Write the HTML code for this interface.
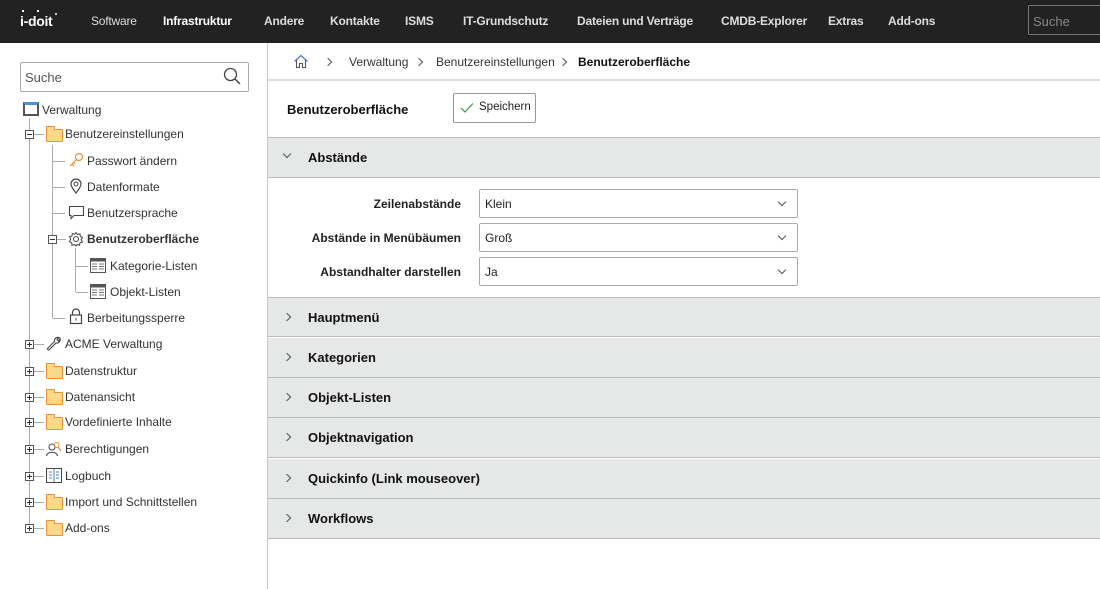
<!DOCTYPE html>
<html><head><meta charset="utf-8"><style>
*{margin:0;padding:0;box-sizing:border-box}
body{width:1100px;height:589px;overflow:hidden;background:#fff;font-family:"Liberation Sans",sans-serif;font-size:12px;color:#222;position:relative}
.a{position:absolute}
#top{left:0;top:0;width:1100px;height:43px;background:#222}
.nav{top:14px;color:#ddd;font-size:12px;font-weight:bold;letter-spacing:-0.2px}
#side{left:0;top:43px;width:268px;height:546px;border-right:1px solid #c8c8c8}
.t{font-size:12px;color:#333;white-space:nowrap}
.vl{background:#aaa;width:1px}
.hl{background:#aaa;height:1px}
.pb{width:9px;height:9px;border:1px solid #555;background:#fff}
.pb:before{content:"";position:absolute;left:1px;top:3px;width:5px;height:1px;background:#333}
.pb.p:after{content:"";position:absolute;left:3px;top:1px;width:1px;height:5px;background:#333}
.fold{width:17px;height:13px;border:1px solid #e8913b;background:#fbd98c;border-radius:1px}
.fold:before{content:"";position:absolute;left:-1px;top:-4px;width:7px;height:3px;border:1px solid #e8913b;border-bottom:none;background:#fbd98c;border-radius:1px 1px 0 0}
.sec{left:268px;width:832px;height:40px;background:#e6e7e7;border-bottom:1px solid #bbb}
.sec b{position:absolute;left:40px;top:12px;font-size:13px;color:#111}
.sec i{position:absolute;left:16px;top:16px;width:6px;height:6px;border-right:1px solid #555;border-top:1px solid #555;transform:rotate(45deg)}
.lbl{font-weight:bold;font-size:12px;color:#222;text-align:right;width:200px;left:261px}
.sel{left:479px;width:319px;height:29px;border:1px solid #aaa;border-radius:2px;background:#fff}
.sel span{position:absolute;left:5px;top:7px;font-size:12px}
.sel i{position:absolute;right:12px;top:9px;width:6px;height:6px;border-right:1px solid #555;border-bottom:1px solid #555;transform:rotate(45deg)}
.bc{font-size:12px;color:#333;top:55px}
.chev{width:6px;height:6px;border-right:1px solid #555;border-top:1px solid #555;transform:rotate(45deg)}
</style></head><body>
<div id="top" class="a"></div>
<div class="a" style="left:20px;top:13px;color:#fff;font-weight:bold;font-size:14px;letter-spacing:-0.3px">i-doit</div>
<div class="a" style="left:22px;top:10px;width:2px;height:2px;background:#fff"></div>
<div class="a" style="left:37px;top:10px;width:2px;height:2px;background:#fff"></div>
<div class="a" style="left:55px;top:13px;width:2px;height:2px;background:#ccc"></div>
<div class="a nav" style="left:91px;font-weight:normal">Software</div>
<div class="a nav" style="left:163px;color:#fff">Infrastruktur</div>
<div class="a nav" style="left:264px">Andere</div>
<div class="a nav" style="left:330px">Kontakte</div>
<div class="a nav" style="left:405px">ISMS</div>
<div class="a nav" style="left:463px">IT-Grundschutz</div>
<div class="a nav" style="left:577px">Dateien und Verträge</div>
<div class="a nav" style="left:721px">CMDB-Explorer</div>
<div class="a nav" style="left:828px">Extras</div>
<div class="a nav" style="left:888px">Add-ons</div>
<div class="a" style="left:1028px;top:5px;width:80px;height:30px;border:1px solid #777;border-radius:2px;background:#222"></div>
<div class="a" style="left:1033px;top:14px;color:#888;font-size:13px">Suche</div>

<div id="side" class="a"></div>
<div class="a" style="left:20px;top:62px;width:229px;height:30px;border:1px solid #aaa;border-radius:2px"></div>
<div class="a" style="left:25px;top:70px;color:#555;font-size:13px">Suche</div>
<svg class="a" style="left:223px;top:67px" width="18" height="18"><circle cx="7.5" cy="7.5" r="6" fill="none" stroke="#444" stroke-width="1.3"/><line x1="12" y1="12" x2="17" y2="17" stroke="#444" stroke-width="1.4"/></svg>

<div class="a vl" style="left:29px;top:118px;height:410px"></div>
<div class="a vl" style="left:52px;top:145px;height:173px"></div>
<div class="a vl" style="left:75px;top:248px;height:44px"></div>
<div class="a" style="left:23px;top:102px;width:16px;height:14px;border:2px solid #555;border-top:3px solid #4a90d9;background:#fff"></div>
<div class="a t" style="left:42px;top:103px">Verwaltung</div>
<div class="a pb" style="left:25px;top:130px"></div><div class="a hl" style="left:34px;top:134px;width:10px"></div>
<div class="a fold" style="left:46px;top:129px"></div>
<div class="a t" style="left:65px;top:127px">Benutzereinstellungen</div>
<div class="a hl" style="left:53px;top:161px;width:12px"></div>
<svg class="a" style="left:68px;top:152px" width="16" height="16"><circle cx="11" cy="5" r="3.5" fill="none" stroke="#e8913b" stroke-width="1.2"/><path d="M8.5 7.5 L2 14 M4 12 L6 14 M5.5 10.5 L7 12" stroke="#e8913b" stroke-width="1.2" fill="none"/></svg>
<div class="a t" style="left:87px;top:154px">Passwort ändern</div>
<div class="a hl" style="left:53px;top:187px;width:12px"></div>
<svg class="a" style="left:69px;top:178px" width="14" height="17"><path d="M7 15 C3 10 2 8 2 6 A5 5 0 0 1 12 6 C12 8 11 10 7 15Z" fill="none" stroke="#444" stroke-width="1.2"/><circle cx="7" cy="6" r="2" fill="none" stroke="#444"/></svg>
<div class="a t" style="left:87px;top:180px">Datenformate</div>
<div class="a hl" style="left:53px;top:213px;width:12px"></div>
<svg class="a" style="left:68px;top:205px" width="17" height="15"><path d="M1.5 1.5 H15.5 V10.5 H6 L3 13.5 V10.5 H1.5Z" fill="none" stroke="#444" stroke-width="1.1"/></svg>
<div class="a t" style="left:87px;top:206px">Benutzersprache</div>
<div class="a pb" style="left:48px;top:235px"></div><div class="a hl" style="left:57px;top:239px;width:9px"></div>
<svg class="a" style="left:68px;top:231px" width="16" height="16"><circle cx="8" cy="8" r="2.5" fill="none" stroke="#444" stroke-width="1.1"/><path d="M8 1.5 L9.5 3.5 L12 2.8 L12.3 5.3 L14.5 6.5 L13.2 8.8 L14.5 11 L12 11.8 L11.5 14.3 L9 13.5 L8 15 L6.5 13.5 L4 14.3 L3.7 11.8 L1.5 10.5 L2.8 8 L1.5 5.8 L4 5 L4.3 2.5 L6.8 3.3Z" fill="none" stroke="#444" stroke-width="1"/></svg>
<div class="a t" style="left:87px;top:232px;font-weight:bold">Benutzeroberfläche</div>
<div class="a hl" style="left:76px;top:266px;width:12px"></div>
<svg class="a" style="left:90px;top:258px" width="16" height="15"><rect x="0.5" y="0.5" width="15" height="14" fill="#fff" stroke="#555"/><rect x="0.5" y="0.5" width="15" height="3" fill="#555"/><path d="M2 6H7M2 8.5H7M2 11H7M9 6H14M9 8.5H14M9 11H14" stroke="#777"/></svg>
<div class="a t" style="left:110px;top:259px">Kategorie-Listen</div>
<div class="a hl" style="left:76px;top:292px;width:12px"></div>
<svg class="a" style="left:90px;top:284px" width="16" height="15"><rect x="0.5" y="0.5" width="15" height="14" fill="#fff" stroke="#555"/><rect x="0.5" y="0.5" width="15" height="3" fill="#555"/><path d="M2 6H7M2 8.5H7M2 11H7M9 6H14M9 8.5H14M9 11H14" stroke="#777"/></svg>
<div class="a t" style="left:110px;top:285px">Objekt-Listen</div>
<div class="a hl" style="left:53px;top:318px;width:12px"></div>
<svg class="a" style="left:69px;top:308px" width="14" height="17"><path d="M3.5 7 V4.5 A3.5 3.5 0 0 1 10.5 4.5 V7" fill="none" stroke="#444" stroke-width="1.2"/><rect x="1.5" y="7" width="11" height="8.5" fill="none" stroke="#444" stroke-width="1.2"/><rect x="6.5" y="10" width="1" height="2.5" fill="#444"/></svg>
<div class="a t" style="left:87px;top:311px">Berbeitungssperre</div>
<div class="a pb p" style="left:25px;top:340px"></div><div class="a hl" style="left:34px;top:344px;width:10px"></div>
<svg class="a" style="left:46px;top:336px" width="16" height="16"><path d="M14 2.5 A3.5 3.5 0 0 1 10 7 L3 14 A1.4 1.4 0 0 1 1.5 12.5 L8.5 5.5 A3.5 3.5 0 0 1 13 1.5 L11 3.5 L12.5 5 Z" fill="none" stroke="#444" stroke-width="1.1"/></svg>
<div class="a t" style="left:65px;top:337px">ACME Verwaltung</div>
<div class="a pb p" style="left:25px;top:367px"></div><div class="a hl" style="left:34px;top:371px;width:10px"></div>
<div class="a fold" style="left:46px;top:366px"></div><div class="a t" style="left:65px;top:364px">Datenstruktur</div>
<div class="a pb p" style="left:25px;top:393px"></div><div class="a hl" style="left:34px;top:397px;width:10px"></div>
<div class="a fold" style="left:46px;top:392px"></div><div class="a t" style="left:65px;top:390px">Datenansicht</div>
<div class="a pb p" style="left:25px;top:418px"></div><div class="a hl" style="left:34px;top:422px;width:10px"></div>
<div class="a fold" style="left:46px;top:417px"></div><div class="a t" style="left:65px;top:415px">Vordefinierte Inhalte</div>
<div class="a pb p" style="left:25px;top:445px"></div><div class="a hl" style="left:34px;top:449px;width:10px"></div>
<svg class="a" style="left:45px;top:441px" width="18" height="16"><circle cx="7" cy="6" r="3" fill="none" stroke="#444"/><path d="M1.5 15 C2 10 12 10 12.5 15" fill="none" stroke="#444"/><circle cx="11.5" cy="4" r="2.5" fill="none" stroke="#e8913b"/><path d="M13 6 L16 10" stroke="#e8913b" stroke-width="1.3"/></svg>
<div class="a t" style="left:65px;top:442px">Berechtigungen</div>
<div class="a pb p" style="left:25px;top:472px"></div><div class="a hl" style="left:34px;top:476px;width:10px"></div>
<svg class="a" style="left:46px;top:468px" width="16" height="15"><rect x="0.5" y="0.5" width="15" height="14" fill="#fff" stroke="#444"/><path d="M8 1V14M3 4H6M3 7H6M3 10H6M10 4H13M10 7H13M10 10H13" stroke="#4a7fbf"/></svg>
<div class="a t" style="left:65px;top:469px">Logbuch</div>
<div class="a pb p" style="left:25px;top:498px"></div><div class="a hl" style="left:34px;top:502px;width:10px"></div>
<div class="a fold" style="left:46px;top:497px"></div><div class="a t" style="left:65px;top:495px">Import und Schnittstellen</div>
<div class="a pb p" style="left:25px;top:524px"></div><div class="a hl" style="left:34px;top:528px;width:10px"></div>
<div class="a fold" style="left:46px;top:523px"></div><div class="a t" style="left:65px;top:521px">Add-ons</div>

<div class="a" style="left:268px;top:79px;width:832px;height:2px;background:#ddd"></div>
<svg class="a" style="left:293px;top:54px" width="16" height="15"><path d="M1.5 7.5 L8 1.5 L14.5 7.5" fill="none" stroke="#4a7fbf" stroke-width="1.3"/><path d="M3.5 6 V13.5 H6.5 V9.5 H9.5 V13.5 H12.5 V6" fill="none" stroke="#555" stroke-width="1.1"/></svg>
<div class="a chev" style="left:325px;top:59px"></div>
<div class="a bc" style="left:349px">Verwaltung</div>
<div class="a chev" style="left:416px;top:59px"></div>
<div class="a bc" style="left:436px">Benutzereinstellungen</div>
<div class="a chev" style="left:560px;top:59px"></div>
<div class="a bc" style="left:578px;font-weight:bold;color:#111">Benutzeroberfläche</div>

<div class="a" style="left:287px;top:102px;font-weight:bold;font-size:13px;color:#111">Benutzeroberfläche</div>
<div class="a" style="left:453px;top:93px;width:83px;height:30px;border:1px solid #999;border-radius:2px;background:#fff"></div>
<svg class="a" style="left:460px;top:102px" width="14" height="12"><path d="M1 6 L5 10 L13 1.5" fill="none" stroke="#3a9a3a" stroke-width="1.2"/></svg>
<div class="a" style="left:479px;top:101px;font-size:11.5px">Speichern</div>

<div class="a sec" style="top:137px;border-top:1px solid #bbb;height:41px"><i style="transform:rotate(135deg);top:13px"></i><b>Abstände</b></div>
<div class="a lbl" style="top:197px">Zeilenabstände</div>
<div class="a sel" style="top:189px"><span>Klein</span><i></i></div>
<div class="a lbl" style="top:231px">Abstände in Menübäumen</div>
<div class="a sel" style="top:223px"><span>Groß</span><i></i></div>
<div class="a lbl" style="top:265px">Abstandhalter darstellen</div>
<div class="a sel" style="top:257px"><span>Ja</span><i></i></div>

<div class="a sec" style="top:297px;border-top:1px solid #bbb"><i></i><b>Hauptmenü</b></div>
<div class="a sec" style="top:338px"><i></i><b>Kategorien</b></div>
<div class="a sec" style="top:378px"><i></i><b>Objekt-Listen</b></div>
<div class="a sec" style="top:418px"><i></i><b>Objektnavigation</b></div>
<div class="a sec" style="top:459px"><i></i><b>Quickinfo (Link mouseover)</b></div>
<div class="a sec" style="top:499px"><i></i><b>Workflows</b></div>
</body></html>
